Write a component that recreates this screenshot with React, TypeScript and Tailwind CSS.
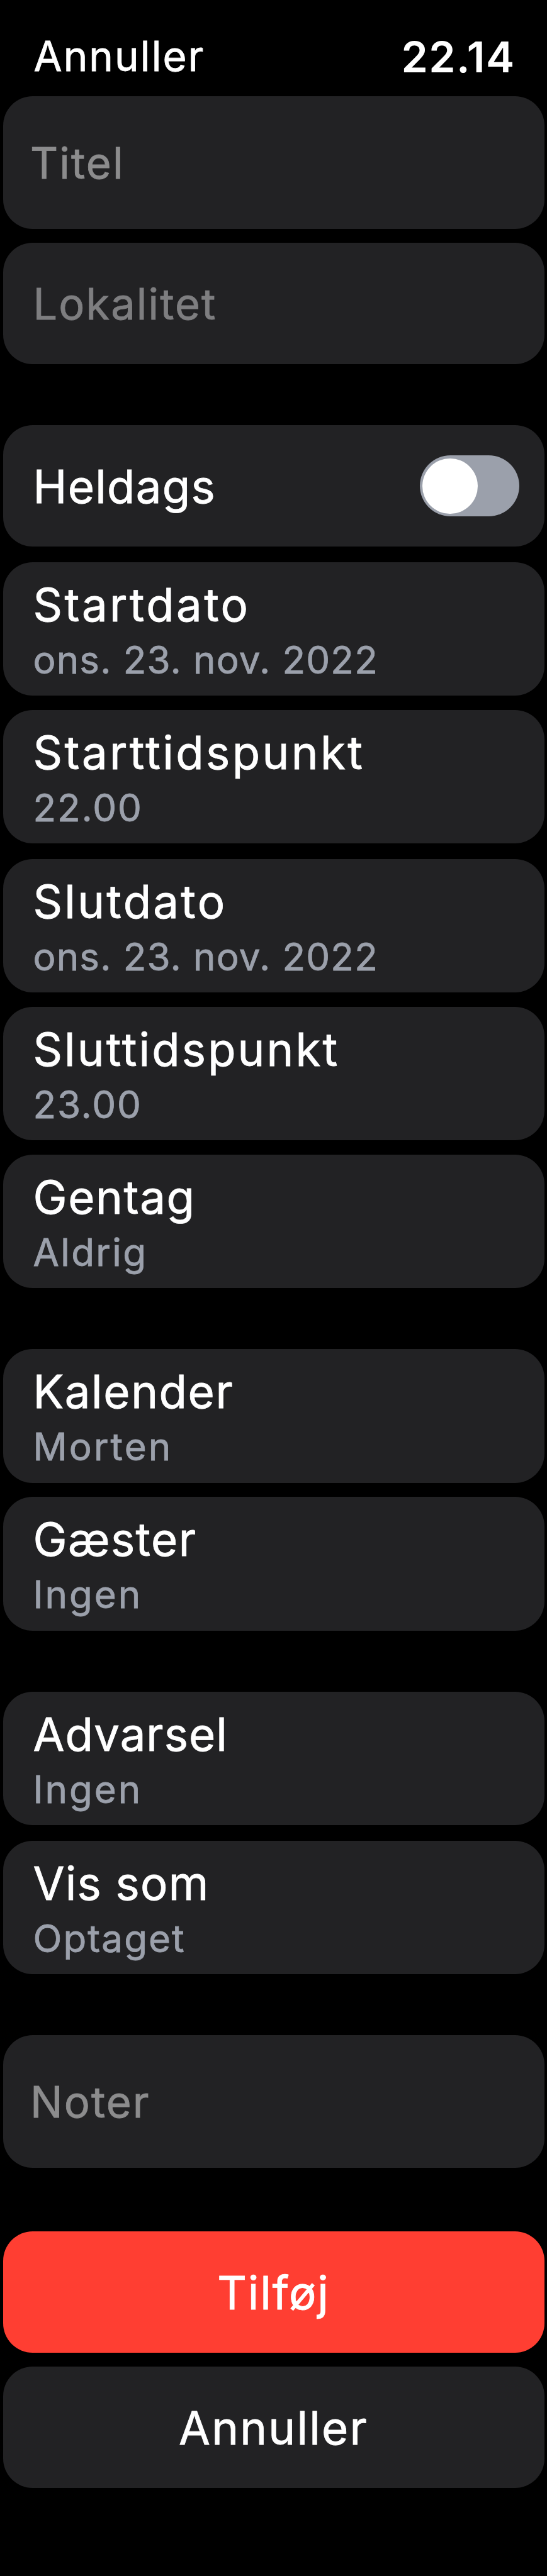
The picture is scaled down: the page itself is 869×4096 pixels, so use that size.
/* ─── ROW ───────────────────────────────────────────── */
interface RowProps {
    title: string;
    value: string;
    titleClass?: string;
    valueClass?: string;
    className?: string;
}

const Row: React.FC<RowProps> = ({ title, value, titleClass = "", valueClass = "", className = "" }) => (
    <div className={`h-[212.5px] rounded-[47px] bg-[#222224] pt-[26px] pl-12 ${className}`}>
        <p className={`text-[72.5px] leading-[84px] whitespace-nowrap text-white ${titleClass}`}>{title}</p>
        <p className={`mt-[9px] text-[60px] leading-[72px] whitespace-nowrap text-[#9ba0ab] ${valueClass}`}>{value}</p>
    </div>
);

/* ─── TEXT FIELD ────────────────────────────────────── */
interface FieldProps {
    label: string;
    className: string;
}

const Field: React.FC<FieldProps> = ({ label, className }) => (
    <div className={`flex items-center rounded-[47px] bg-[#222224] pt-[2.5px] text-[68.5px] leading-[84px] tracking-[2.1px] ${className}`}>
        {label}
    </div>
);

/* ─── SWITCH ────────────────────────────────────────── */
const Switch: React.FC = () => (
    <div className="flex h-[97px] w-[158px] items-center rounded-full bg-[#9ba0ab] pl-1">
        <div className="h-[88px] w-[88px] rounded-full bg-white" />
    </div>
);

/* ─── BUTTON ────────────────────────────────────────── */
interface ButtonProps {
    label: string;
    className: string;
}

const Button: React.FC<ButtonProps> = ({ label, className }) => (
    <button className={`flex h-[193px] w-full items-center justify-center rounded-[47px] pt-[3px] text-[72.5px] leading-[84px] text-white ${className}`}>
        {label}
    </button>
);

const App: React.FC = () => (
    <div className="h-[4096px] w-[869px] overflow-hidden bg-black px-[4.5px] font-['Inter',sans-serif] text-white [-webkit-text-stroke:0.8px]">
        <header className="flex h-[153px] items-start justify-between pt-[48.5px] pr-[46px] pl-[49px] leading-[82px]">
            <span className="text-[65.3px] tracking-[2.1px]">Annuller</span>
            <span className="text-[68px] font-semibold tracking-[1.3px] [-webkit-text-stroke:0px]">22.14</span>
        </header>

        <div className="flex flex-col gap-[97px]">
            <section className="flex flex-col gap-[22px]">
                <Field label="Titel" className="h-[211px] pl-[43.5px] text-[#8c8c8d]" />
                <Field label="Lokalitet" className="h-[193px] pl-12 text-[#7e7e80]" />
            </section>

            <section className="flex flex-col gap-[22.5px]">
                <div className="mb-[2px] flex h-[193px] items-center justify-between rounded-[47px] bg-[#222224] pr-[39.5px] pl-12">
                    <span className="pt-[3px] text-[72.5px] leading-[84px] tracking-[1.3px]">Heldags</span>
                    <Switch />
                </div>
                <Row title="Startdato" value="ons. 23. nov. 2022" titleClass="tracking-[3.4px]" valueClass="tracking-[1.2px]" />
                <Row title="Starttidspunkt" value="22.00" titleClass="tracking-[3.4px]" valueClass="tracking-[1.9px]" className="mb-[2px]" />
                <Row title="Slutdato" value="ons. 23. nov. 2022" titleClass="tracking-[3.3px]" valueClass="tracking-[1.2px]" />
                <Row title="Sluttidspunkt" value="23.00" titleClass="tracking-[3.1px]" valueClass="tracking-[1.9px]" />
                <Row title="Gentag" value="Aldrig" titleClass="tracking-[1.6px]" valueClass="tracking-[2.4px]" />
            </section>

            <section className="flex flex-col gap-[22.5px]">
                <Row title="Kalender" value="Morten" titleClass="tracking-[1.6px]" valueClass="tracking-[3.1px]" />
                <Row title="Gæster" value="Ingen" titleClass="tracking-[1.4px]" valueClass="tracking-[3px]" />
            </section>

            <section className="flex flex-col gap-[24.5px]">
                <Row title="Advarsel" value="Ingen" titleClass="tracking-[1px]" valueClass="tracking-[3px]" />
                <Row title="Vis som" value="Optaget" titleClass="tracking-[1.2px]" valueClass="tracking-[2.1px]" />
            </section>

            <Field label="Noter" className="mb-1 h-[211px] pl-[43.5px] text-[#8c8c8d]" />

            <section className="flex flex-col gap-[22px]">
                <Button label="Tilføj" className="bg-[#ff3e32] tracking-[1.8px]" />
                <Button label="Annuller" className="bg-[#222224] tracking-[2.2px]" />
            </section>
        </div>
    </div>
);

export default App;
